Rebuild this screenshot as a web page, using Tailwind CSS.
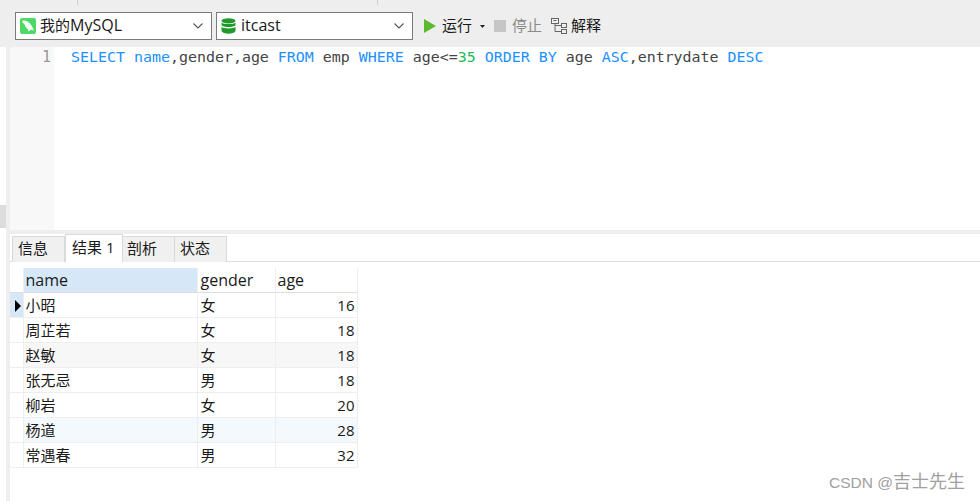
<!DOCTYPE html>
<html lang="en">
<head>
  <meta charset="UTF-8">
  <title>Navicat</title>
  <script src="https://cdn.jsdelivr.net/npm/@tailwindcss/browser@4"></script>
</head>
<body class="relative h-[501px] w-[980px] overflow-hidden bg-white font-['Open_Sans','Noto_Sans_CJK_SC',sans-serif] text-[15px] text-[#1a1a1a]">
  <!-- toolbar -->
  <div class="relative flex h-[47px] items-start bg-[#eeeeee] pt-[12px] pl-[15px]">
    <div class="absolute top-0 left-[77px] h-[5px] w-px bg-[#cfcfcf]"></div>
    <div class="absolute top-0 left-[377px] h-[5px] w-px bg-[#cfcfcf]"></div>

    <div class="flex h-[28px] w-[197px] items-center border border-[#7a7a7a] bg-white pr-[8px] pl-[4px]">
      <svg class="h-[16px] w-[16px] shrink-0" viewBox="0 0 16 16">
        <rect width="16" height="16" rx="2" fill="#4cd964"/>
        <path d="M2 3 C4 2 7 2.8 9 4.6 C11 6.4 12.8 9 14 13 C12.8 12 11.6 11.6 10.6 11.9 C9.8 12.8 9 13.2 7.8 13.3 C8.2 12.4 8.1 11.7 7.6 11 C6 10 5 8.4 4.7 6.6 C3.8 6 2.8 4.8 2 3Z" fill="#fff" opacity="0.95"/>
      </svg>
      <span class="ml-[4px] flex-1 pb-[2px] leading-[24px]">我的<span class="text-[16px]">MySQL</span></span>
      <svg class="h-[6px] w-[10px]" viewBox="0 0 10 6" fill="none" stroke="#555" stroke-width="1.1"><path d="M0.5 0.5 L5 5 L9.5 0.5"/></svg>
    </div>

    <div class="ml-[4px] flex h-[28px] w-[197px] items-center border border-[#7a7a7a] bg-white pr-[8px] pl-[4px]">
      <svg class="h-[16px] w-[15px] shrink-0" viewBox="0 0 15 16">
        <ellipse cx="7.5" cy="2.8" rx="7" ry="2.6" fill="#1f9a2b"/>
        <path d="M0.5 4.4 C2 6.6 13 6.6 14.5 4.4 V7.2 C13 9.6 2 9.6 0.5 7.2Z" fill="#1f9a2b"/>
        <path d="M0.5 8.8 C2 11 13 11 14.5 8.8 V13 C13 16.6 2 16.6 0.5 13Z" fill="#1f9a2b"/>
      </svg>
      <span class="ml-[5px] flex-1 pb-[2px] text-[16px] leading-[24px]">itcast</span>
      <svg class="h-[6px] w-[10px]" viewBox="0 0 10 6" fill="none" stroke="#555" stroke-width="1.1"><path d="M0.5 0.5 L5 5 L9.5 0.5"/></svg>
    </div>

    <div class="flex h-[28px] items-center">
      <svg class="ml-[11px] h-[14px] w-[12px]" viewBox="0 0 12 14"><path d="M0 0 L12 7 L0 14Z" fill="#5cba2e"/></svg>
      <span class="ml-[6px] pb-[2px]">运行</span>
      <svg class="ml-[8px] h-[3px] w-[5px]" viewBox="0 0 5 3"><path d="M0 0 H5 L2.5 3Z" fill="#222"/></svg>
      <div class="ml-[9px] h-[12px] w-[12px] bg-[#c6c6c6]"></div>
      <span class="ml-[6px] pb-[2px] text-[#8a8a8a]">停止</span>
      <svg class="ml-[9px] h-[16px] w-[16px]" viewBox="0 0 16 16" fill="none" stroke="#666" stroke-width="1">
        <rect x="0.5" y="0.5" width="7" height="5"/>
        <rect x="10.5" y="5.5" width="5" height="4"/>
        <rect x="10.5" y="11.5" width="5" height="4"/>
        <path d="M2.5 2.5 H5.5 M4 5.5 V13.5 H10.5 M4 7.5 H10.5"/>
      </svg>
      <span class="ml-[4px] pb-[2px]">解释</span>
    </div>
  </div>

  <div class="flex h-[454px]">
    <!-- left rail -->
    <div class="w-[6px] shrink-0 pt-[158px]"><div class="h-[23px] bg-[#dcdcdc]"></div></div>
    <div class="w-[4px] shrink-0 bg-[#eeeeee]"></div>

    <div class="min-w-0 flex-1">
      <!-- editor -->
      <div class="flex h-[183px]">
        <div class="w-[44px] shrink-0 bg-[#f8f8f8] pr-[3px] text-right font-['DejaVu_Sans_Mono',monospace] text-[15px] leading-[20px] text-[#999999]">1</div>
        <div class="pl-[17px] font-['DejaVu_Sans_Mono',monospace] text-[14.95px] leading-[20px] whitespace-pre text-[#444444]"><span class="text-[#1e90ff]">SELECT name</span>,gender,age <span class="text-[#1e90ff]">FROM</span> emp <span class="text-[#1e90ff]">WHERE</span> age&lt;=<span class="text-[#22bb55]">35</span> <span class="text-[#1e90ff]">ORDER BY</span> age <span class="text-[#1e90ff]">ASC</span>,entrydate <span class="text-[#1e90ff]">DESC</span></div>
      </div>
      <div class="h-[4px] bg-[#eeeeee]"></div>

      <!-- tabs -->
      <div class="flex h-[28px] items-end border-b border-[#dddddd] pl-[2px]">
        <div class="mb-[-1px] flex h-[26px] w-[53px] items-center border border-b-0 border-[#d9d9d9] bg-[#f0f0f0] pb-[2px] pl-[5px]">信息</div>
        <div class="mb-[-1px] flex h-[28px] w-[58px] items-center border border-b-0 border-[#d9d9d9] bg-white pb-[2px] pl-[6px]">结果 1</div>
        <div class="mb-[-1px] flex h-[26px] w-[52px] items-center border-t border-r border-[#d9d9d9] bg-[#f0f0f0] pb-[2px] pl-[4px]">剖析</div>
        <div class="mb-[-1px] flex h-[26px] w-[52px] items-center border-t border-r border-[#d9d9d9] bg-[#f0f0f0] pb-[2px] pl-[5px]">状态</div>
      </div>

      <!-- result grid -->
      <table class="mt-[6px] table-fixed border-collapse text-[15px]">
        <colgroup>
          <col class="w-[13px]"><col class="w-[174px]"><col class="w-[78px]"><col class="w-[82px]">
        </colgroup>
        <thead>
          <tr class="h-[24px] border-b border-[#dddddd] text-[16px]">
            <th class="border-r border-[#eeeeee]"></th>
            <th class="border-r border-[#eeeeee] bg-[#d6e8f7] pl-[2px] text-left font-normal">name</th>
            <th class="border-r border-[#eeeeee] pl-[3px] text-left font-normal">gender</th>
            <th class="border-r border-[#eeeeee] pl-[2px] text-left font-normal">age</th>
          </tr>
        </thead>
        <tbody class="[&_td]:pt-px">
          <tr class="h-[25px] border-b border-[#eeeeee]">
            <td class="border-r border-[#eeeeee] bg-[#d6e8f7]"><svg class="ml-[5px] h-[12px] w-[6px]" viewBox="0 0 6 12"><path d="M0 0 L6 6 L0 12Z" fill="#000"/></svg></td>
            <td class="border-r border-[#eeeeee] pl-[2px]">小昭</td>
            <td class="border-r border-[#eeeeee] pl-[3px]">女</td>
            <td class="border-r border-[#eeeeee] pr-[2px] text-right">16</td>
          </tr>
          <tr class="h-[25px] border-b border-[#eeeeee]">
            <td class="border-r border-[#eeeeee]"></td>
            <td class="border-r border-[#eeeeee] pl-[2px]">周芷若</td>
            <td class="border-r border-[#eeeeee] pl-[3px]">女</td>
            <td class="border-r border-[#eeeeee] pr-[2px] text-right">18</td>
          </tr>
          <tr class="h-[25px] border-b border-[#eeeeee]">
            <td class="border-r border-[#eeeeee]"></td>
            <td class="border-r border-[#eeeeee] bg-[#f7f7f7] pl-[2px]">赵敏</td>
            <td class="border-r border-[#eeeeee] bg-[#f7f7f7] pl-[3px]">女</td>
            <td class="border-r border-[#eeeeee] bg-[#f7f7f7] pr-[2px] text-right">18</td>
          </tr>
          <tr class="h-[25px] border-b border-[#eeeeee]">
            <td class="border-r border-[#eeeeee]"></td>
            <td class="border-r border-[#eeeeee] pl-[2px]">张无忌</td>
            <td class="border-r border-[#eeeeee] pl-[3px]">男</td>
            <td class="border-r border-[#eeeeee] pr-[2px] text-right">18</td>
          </tr>
          <tr class="h-[25px] border-b border-[#eeeeee]">
            <td class="border-r border-[#eeeeee]"></td>
            <td class="border-r border-[#eeeeee] pl-[2px]">柳岩</td>
            <td class="border-r border-[#eeeeee] pl-[3px]">女</td>
            <td class="border-r border-[#eeeeee] pr-[2px] text-right">20</td>
          </tr>
          <tr class="h-[25px] border-b border-[#eeeeee]">
            <td class="border-r border-[#eeeeee]"></td>
            <td class="border-r border-[#eeeeee] bg-[#f4f9fd] pl-[2px]">杨道</td>
            <td class="border-r border-[#eeeeee] bg-[#f4f9fd] pl-[3px]">男</td>
            <td class="border-r border-[#eeeeee] bg-[#f4f9fd] pr-[2px] text-right">28</td>
          </tr>
          <tr class="h-[25px] border-b border-[#eeeeee]">
            <td class="border-r border-[#eeeeee]"></td>
            <td class="border-r border-[#eeeeee] pl-[2px]">常遇春</td>
            <td class="border-r border-[#eeeeee] pl-[3px]">男</td>
            <td class="border-r border-[#eeeeee] pr-[2px] text-right">32</td>
          </tr>
        </tbody>
      </table>
    </div>
  </div>

  <!-- watermark -->
  <div class="absolute top-[471px] left-[829px] font-['Liberation_Sans','Noto_Sans_CJK_SC',sans-serif] text-[15.5px] leading-[22px] text-[#a0a0a0]">CSDN @<span class="text-[18px]">吉士先生</span></div>
</body>
</html>
